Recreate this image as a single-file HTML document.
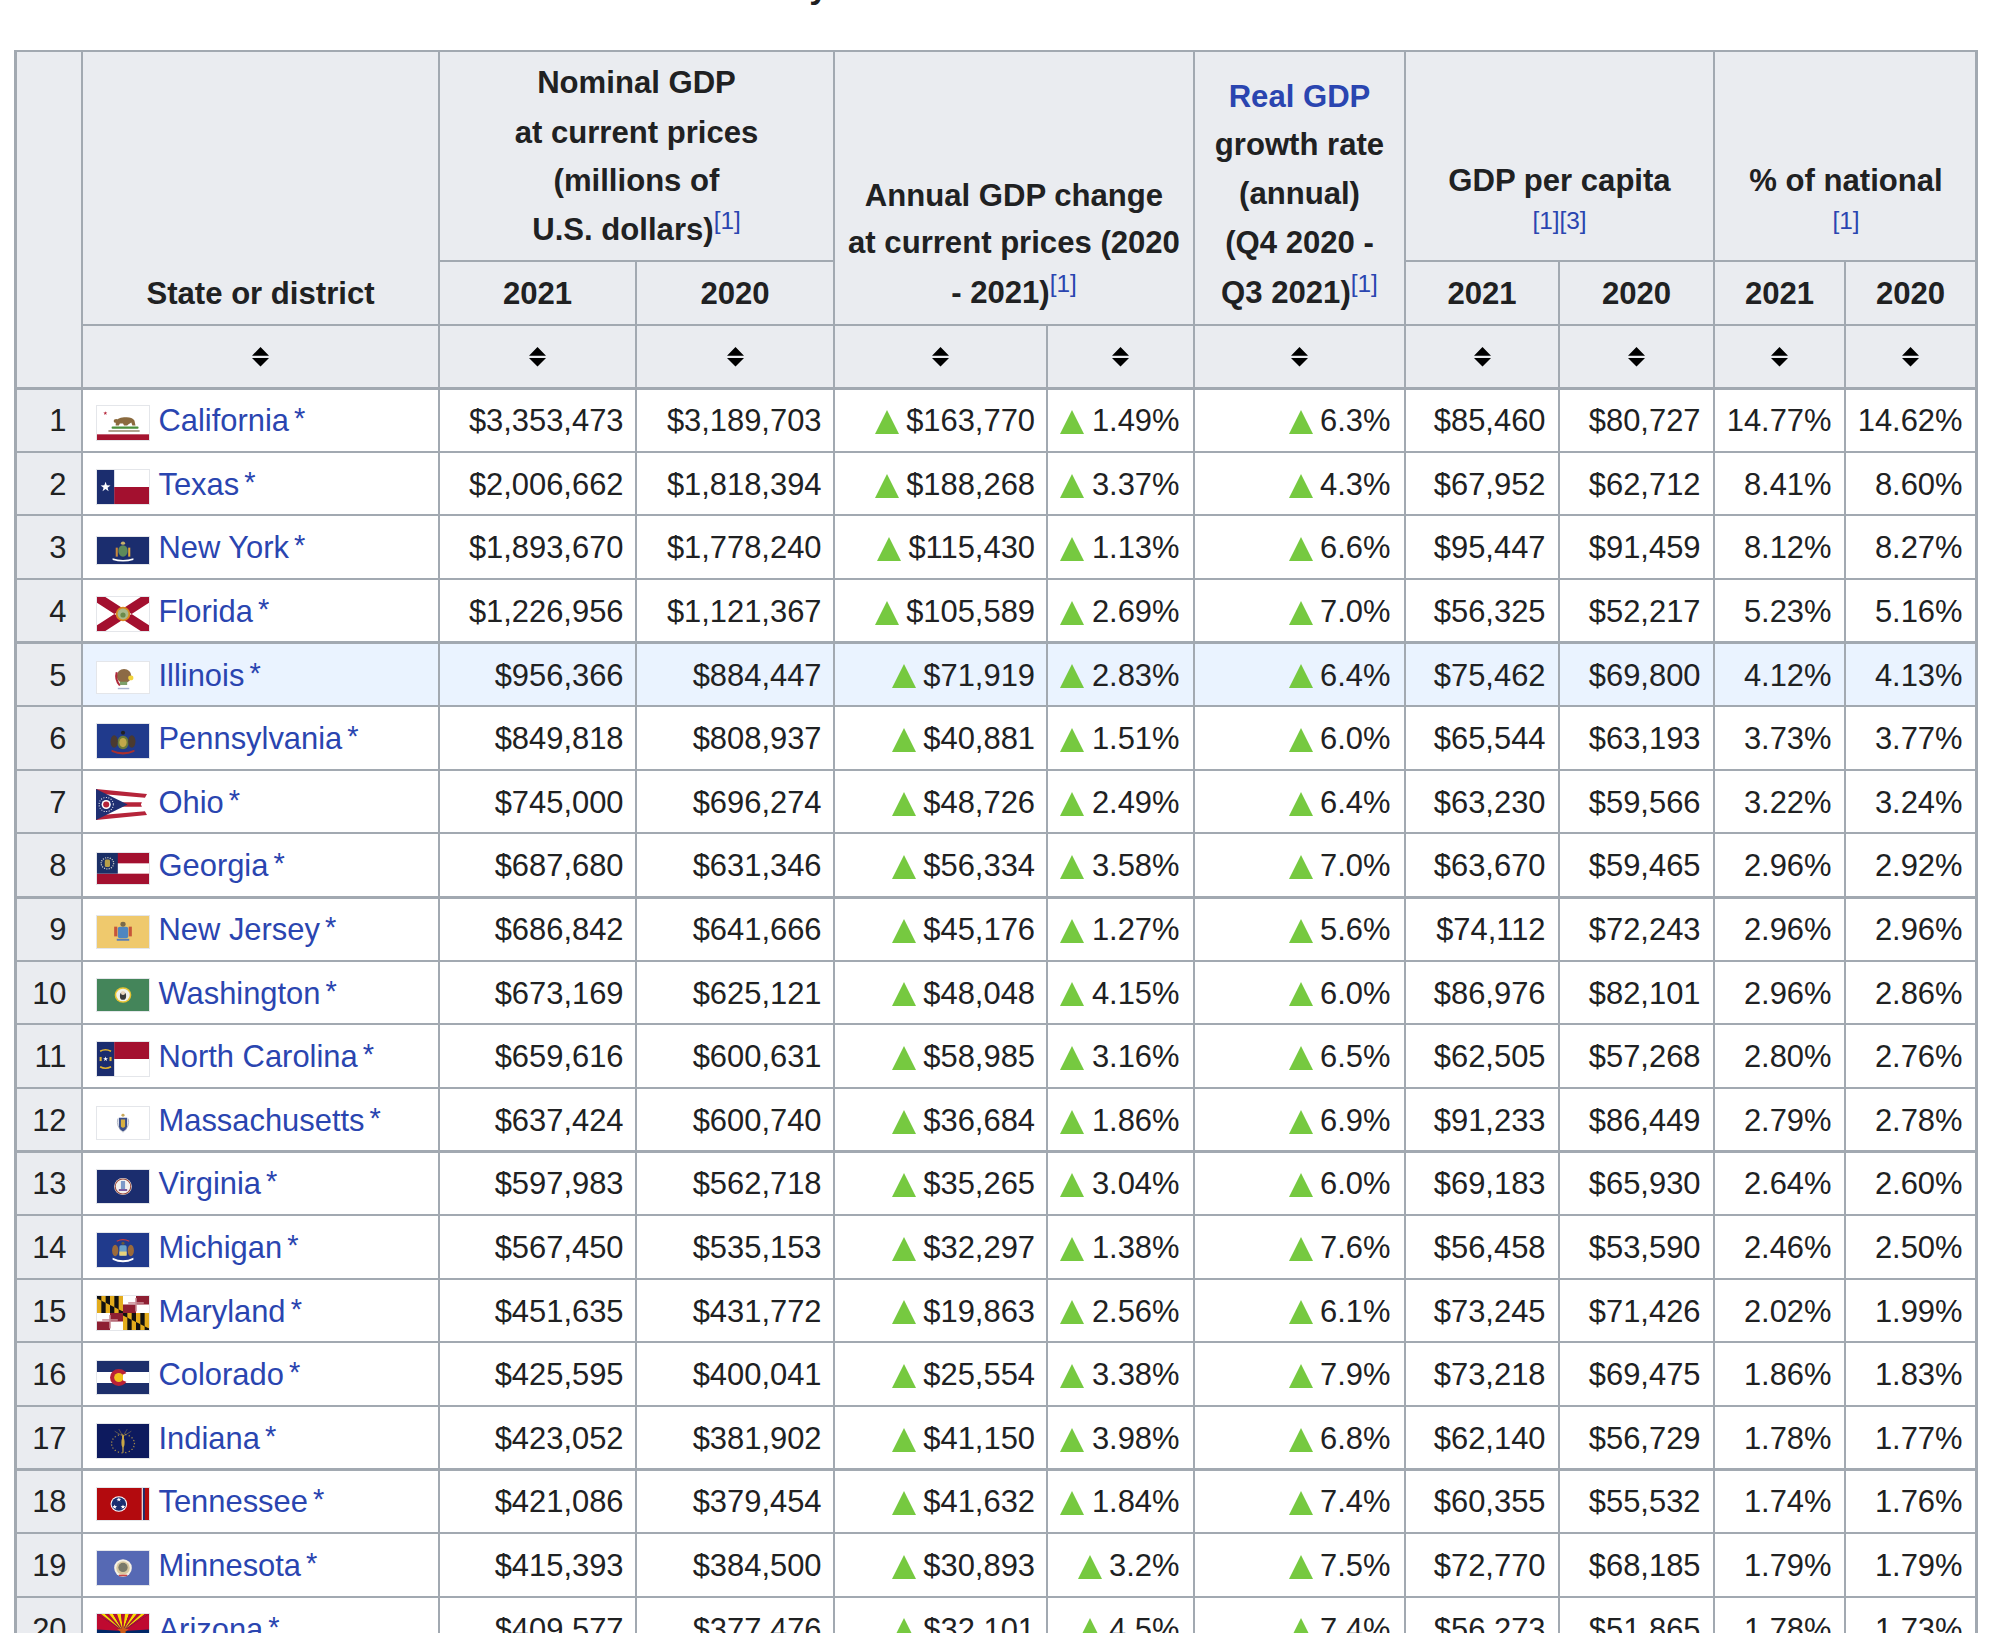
<!DOCTYPE html>
<html><head><meta charset="utf-8"><title>GDP by state</title>
<style>
html,body{margin:0;padding:0;background:#fff;}
body{width:2000px;height:1633px;overflow:hidden;position:relative;font-family:"Liberation Sans",sans-serif;font-size:30.9px;color:#202122;}
body>div{position:absolute;}
.ref{font-weight:normal;color:#2a45b0;font-size:24.4px;vertical-align:super;line-height:1;}
.tri{vertical-align:middle;position:relative;top:-1px;margin-right:-1px;}
.n{text-align:right;white-space:nowrap;line-height:49.3px;}
.ast{margin-left:-3.5px;font-size:29px;position:relative;top:-3px;}
svg{display:inline-block;}
body>div>svg.s{display:block;}
.cap{font-weight:bold;}
</style></head><body>
<div class="cap" style="left:706px;top:-34px;font-size:34px;line-height:40px;white-space:nowrap">GDP by state</div>
<div style="left:14px;top:50px;width:1963px;height:339px;background:#eaecf0"></div>
<div style="left:14px;top:389px;width:68px;height:1244px;background:#eaecf0"></div>
<div style="left:83px;top:643px;width:1892px;height:63px;background:#eaf3ff"></div>
<div style="left:14px;top:50px;width:1963px;height:2px;background:#a2a9b1"></div>
<div style="left:438px;top:260px;width:397px;height:2px;background:#a2a9b1"></div>
<div style="left:1404px;top:260px;width:573px;height:2px;background:#a2a9b1"></div>
<div style="left:81px;top:324px;width:1896px;height:2px;background:#a2a9b1"></div>
<div style="left:14px;top:387px;width:1963px;height:3px;background:#a2a9b1"></div>
<div style="left:14px;top:451px;width:1963px;height:2px;background:#a2a9b1"></div>
<div style="left:14px;top:514px;width:1963px;height:2px;background:#a2a9b1"></div>
<div style="left:14px;top:578px;width:1963px;height:2px;background:#a2a9b1"></div>
<div style="left:14px;top:641px;width:1963px;height:3px;background:#a2a9b1"></div>
<div style="left:14px;top:705px;width:1963px;height:2px;background:#a2a9b1"></div>
<div style="left:14px;top:769px;width:1963px;height:2px;background:#a2a9b1"></div>
<div style="left:14px;top:832px;width:1963px;height:2px;background:#a2a9b1"></div>
<div style="left:14px;top:896px;width:1963px;height:3px;background:#a2a9b1"></div>
<div style="left:14px;top:960px;width:1963px;height:2px;background:#a2a9b1"></div>
<div style="left:14px;top:1023px;width:1963px;height:2px;background:#a2a9b1"></div>
<div style="left:14px;top:1087px;width:1963px;height:2px;background:#a2a9b1"></div>
<div style="left:14px;top:1150px;width:1963px;height:3px;background:#a2a9b1"></div>
<div style="left:14px;top:1214px;width:1963px;height:2px;background:#a2a9b1"></div>
<div style="left:14px;top:1278px;width:1963px;height:2px;background:#a2a9b1"></div>
<div style="left:14px;top:1341px;width:1963px;height:2px;background:#a2a9b1"></div>
<div style="left:14px;top:1405px;width:1963px;height:2px;background:#a2a9b1"></div>
<div style="left:14px;top:1468px;width:1963px;height:3px;background:#a2a9b1"></div>
<div style="left:14px;top:1532px;width:1963px;height:2px;background:#a2a9b1"></div>
<div style="left:14px;top:1596px;width:1963px;height:2px;background:#a2a9b1"></div>
<div style="left:14px;top:50px;width:3px;height:1583px;background:#a2a9b1"></div>
<div style="left:1975px;top:50px;width:3px;height:1583px;background:#a2a9b1"></div>
<div style="left:81px;top:50px;width:2px;height:1583px;background:#a2a9b1"></div>
<div style="left:438px;top:50px;width:2px;height:1583px;background:#a2a9b1"></div>
<div style="left:833px;top:50px;width:2px;height:1583px;background:#a2a9b1"></div>
<div style="left:1193px;top:50px;width:2px;height:1583px;background:#a2a9b1"></div>
<div style="left:1404px;top:50px;width:2px;height:1583px;background:#a2a9b1"></div>
<div style="left:1713px;top:50px;width:2px;height:1583px;background:#a2a9b1"></div>
<div style="left:635px;top:260px;width:2px;height:1373px;background:#a2a9b1"></div>
<div style="left:1558px;top:260px;width:2px;height:1373px;background:#a2a9b1"></div>
<div style="left:1844px;top:260px;width:2px;height:1373px;background:#a2a9b1"></div>
<div style="left:1046px;top:324px;width:2px;height:1309px;background:#a2a9b1"></div>
<div style="left:60.5px;top:269.23px;width:400px;text-align:center;font-weight:bold;color:#202122;font-size:31.1px;line-height:49.3px;white-space:nowrap">State or district</div>
<div style="left:436.5px;top:58.48px;width:400px;text-align:center;font-weight:bold;color:#202122;font-size:31.1px;line-height:49.3px;white-space:nowrap">Nominal GDP</div>
<div style="left:436.5px;top:107.88px;width:400px;text-align:center;font-weight:bold;color:#202122;font-size:31.1px;line-height:49.3px;white-space:nowrap">at current prices</div>
<div style="left:436.5px;top:156.18px;width:400px;text-align:center;font-weight:bold;color:#202122;font-size:31.1px;line-height:49.3px;white-space:nowrap">(millions of</div>
<div style="left:436.5px;top:205.48px;width:400px;text-align:center;font-weight:bold;color:#202122;font-size:31.1px;line-height:49.3px;white-space:nowrap">U.S. dollars)<span class="ref">[1]</span></div>
<div style="left:337.5px;top:268.98px;width:400px;text-align:center;font-weight:bold;color:#202122;font-size:31.1px;line-height:49.3px;white-space:nowrap">2021</div>
<div style="left:535.0px;top:268.98px;width:400px;text-align:center;font-weight:bold;color:#202122;font-size:31.1px;line-height:49.3px;white-space:nowrap">2020</div>
<div style="left:814.0px;top:170.68px;width:400px;text-align:center;font-weight:bold;color:#202122;font-size:31.1px;line-height:49.3px;white-space:nowrap">Annual GDP change</div>
<div style="left:814.0px;top:218.48px;width:400px;text-align:center;font-weight:bold;color:#202122;font-size:31.1px;line-height:49.3px;white-space:nowrap">at current prices (2020</div>
<div style="left:814.0px;top:267.78px;width:400px;text-align:center;font-weight:bold;color:#202122;font-size:31.1px;line-height:49.3px;white-space:nowrap">- 2021)<span class="ref">[1]</span></div>
<div style="left:1099.5px;top:71.98px;width:400px;text-align:center;font-weight:bold;color:#2a45b0;font-size:31.1px;line-height:49.3px;white-space:nowrap">Real GDP</div>
<div style="left:1099.5px;top:119.88px;width:400px;text-align:center;font-weight:bold;color:#202122;font-size:31.1px;line-height:49.3px;white-space:nowrap">growth rate</div>
<div style="left:1099.5px;top:169.18px;width:400px;text-align:center;font-weight:bold;color:#202122;font-size:31.1px;line-height:49.3px;white-space:nowrap">(annual)</div>
<div style="left:1099.5px;top:218.48px;width:400px;text-align:center;font-weight:bold;color:#202122;font-size:31.1px;line-height:49.3px;white-space:nowrap">(Q4 2020 -</div>
<div style="left:1099.5px;top:267.78px;width:400px;text-align:center;font-weight:bold;color:#202122;font-size:31.1px;line-height:49.3px;white-space:nowrap">Q3 2021)<span class="ref">[1]</span></div>
<div style="left:1359.5px;top:156.48px;width:400px;text-align:center;font-weight:bold;color:#202122;font-size:31.1px;line-height:49.3px;white-space:nowrap">GDP per capita</div>
<div style="left:1646.0px;top:156.48px;width:400px;text-align:center;font-weight:bold;color:#202122;font-size:31.1px;line-height:49.3px;white-space:nowrap">% of national</div>
<div style="left:1359.5px;top:205.48px;width:400px;text-align:center;font-weight:normal;color:#202122;font-size:31.1px;line-height:49.3px;white-space:nowrap"><span class="ref">[1][3]</span></div>
<div style="left:1646.0px;top:205.48px;width:400px;text-align:center;font-weight:normal;color:#202122;font-size:31.1px;line-height:49.3px;white-space:nowrap"><span class="ref">[1]</span></div>
<div style="left:1282.0px;top:268.98px;width:400px;text-align:center;font-weight:bold;color:#202122;font-size:31.1px;line-height:49.3px;white-space:nowrap">2021</div>
<div style="left:1436.5px;top:268.98px;width:400px;text-align:center;font-weight:bold;color:#202122;font-size:31.1px;line-height:49.3px;white-space:nowrap">2020</div>
<div style="left:1579.5px;top:268.98px;width:400px;text-align:center;font-weight:bold;color:#202122;font-size:31.1px;line-height:49.3px;white-space:nowrap">2021</div>
<div style="left:1710.5px;top:268.98px;width:400px;text-align:center;font-weight:bold;color:#202122;font-size:31.1px;line-height:49.3px;white-space:nowrap">2020</div>
<div style="left:252.0px;top:346.9px;width:17px;height:20px"><svg class="s" width="17" height="20" viewBox="0 0 17 20"><path d="M0 8.7L8.5 0L17 8.7Z M0 11L17 11L8.5 19.4Z" fill="#000"/></svg></div>
<div style="left:528.5px;top:346.9px;width:17px;height:20px"><svg class="s" width="17" height="20" viewBox="0 0 17 20"><path d="M0 8.7L8.5 0L17 8.7Z M0 11L17 11L8.5 19.4Z" fill="#000"/></svg></div>
<div style="left:726.5px;top:346.9px;width:17px;height:20px"><svg class="s" width="17" height="20" viewBox="0 0 17 20"><path d="M0 8.7L8.5 0L17 8.7Z M0 11L17 11L8.5 19.4Z" fill="#000"/></svg></div>
<div style="left:931.5px;top:346.9px;width:17px;height:20px"><svg class="s" width="17" height="20" viewBox="0 0 17 20"><path d="M0 8.7L8.5 0L17 8.7Z M0 11L17 11L8.5 19.4Z" fill="#000"/></svg></div>
<div style="left:1111.5px;top:346.9px;width:17px;height:20px"><svg class="s" width="17" height="20" viewBox="0 0 17 20"><path d="M0 8.7L8.5 0L17 8.7Z M0 11L17 11L8.5 19.4Z" fill="#000"/></svg></div>
<div style="left:1290.5px;top:346.9px;width:17px;height:20px"><svg class="s" width="17" height="20" viewBox="0 0 17 20"><path d="M0 8.7L8.5 0L17 8.7Z M0 11L17 11L8.5 19.4Z" fill="#000"/></svg></div>
<div style="left:1473.5px;top:346.9px;width:17px;height:20px"><svg class="s" width="17" height="20" viewBox="0 0 17 20"><path d="M0 8.7L8.5 0L17 8.7Z M0 11L17 11L8.5 19.4Z" fill="#000"/></svg></div>
<div style="left:1628.0px;top:346.9px;width:17px;height:20px"><svg class="s" width="17" height="20" viewBox="0 0 17 20"><path d="M0 8.7L8.5 0L17 8.7Z M0 11L17 11L8.5 19.4Z" fill="#000"/></svg></div>
<div style="left:1770.5px;top:346.9px;width:17px;height:20px"><svg class="s" width="17" height="20" viewBox="0 0 17 20"><path d="M0 8.7L8.5 0L17 8.7Z M0 11L17 11L8.5 19.4Z" fill="#000"/></svg></div>
<div style="left:1902.0px;top:346.9px;width:17px;height:20px"><svg class="s" width="17" height="20" viewBox="0 0 17 20"><path d="M0 8.7L8.5 0L17 8.7Z M0 11L17 11L8.5 19.4Z" fill="#000"/></svg></div>
<div class="n" style="right:1933.5px;top:396.18px;color:#202122">1</div>
<div style="left:96px;top:405.0px;width:54px;height:36px;border:1.5px solid #e4e6ea;box-sizing:border-box;background:#fff"><svg width="100%" height="100%" viewBox="0 0 100 66" preserveAspectRatio="none" style="display:block"><rect width="100" height="66" fill="#fff"/><polygon points="16.00,10.00 16.94,12.71 19.80,12.76 17.52,14.49 18.35,17.24 16.00,15.60 13.65,17.24 14.48,14.49 12.20,12.76 15.06,12.71" fill="#b5263a"/><path d="M36 34 Q38 22 52 22 Q66 20 72 28 L74 38 L68 38 L66 32 L60 36 L58 38 L52 38 L50 34 L44 34 L42 38 L36 38Z" fill="#8a6a3e"/><ellipse cx="37" cy="29" rx="5" ry="4" fill="#8a6a3e"/><rect x="28" y="40" width="52" height="4" rx="2" fill="#4b8f3a"/><rect x="22" y="47" width="60" height="3" fill="#9a8a70"/><rect y="55" width="100" height="11" fill="#a5142f"/></svg></div>
<div style="left:158.5px;top:396.18px;color:#2a45b0;white-space:nowrap;line-height:49.3px">California <span class="ast">*</span></div>
<div class="n" style="right:1376.5px;top:396.18px;color:#202122">$3,353,473</div>
<div class="n" style="right:1178.5px;top:396.18px;color:#202122">$3,189,703</div>
<div class="n" style="right:965.0px;top:396.18px;color:#202122"><svg class="tri" width="24" height="24" viewBox="0 0 24 24"><path d="M0 24L12 0L24 24Z" fill="#76c940"/></svg> $163,770</div>
<div class="n" style="right:820.5px;top:396.18px;color:#202122"><svg class="tri" width="24" height="24" viewBox="0 0 24 24"><path d="M0 24L12 0L24 24Z" fill="#76c940"/></svg> 1.49%</div>
<div class="n" style="right:609.5px;top:396.18px;color:#202122"><svg class="tri" width="24" height="24" viewBox="0 0 24 24"><path d="M0 24L12 0L24 24Z" fill="#76c940"/></svg> 6.3%</div>
<div class="n" style="right:454.5px;top:396.18px;color:#202122">$85,460</div>
<div class="n" style="right:299.5px;top:396.18px;color:#202122">$80,727</div>
<div class="n" style="right:168.5px;top:396.18px;color:#202122">14.77%</div>
<div class="n" style="right:37.5px;top:396.18px;color:#202122">14.62%</div>
<div class="n" style="right:1933.5px;top:459.78px;color:#202122">2</div>
<div style="left:96px;top:468.6px;width:54px;height:36px;border:1.5px solid #e4e6ea;box-sizing:border-box;background:#fff"><svg width="100%" height="100%" viewBox="0 0 100 66" preserveAspectRatio="none" style="display:block"><rect width="100" height="66" fill="#fff"/><rect x="33" y="33" width="67" height="33" fill="#a3102f"/><rect width="33" height="66" fill="#1b2d6e"/><polygon points="16.50,23.00 18.85,29.76 26.01,29.91 20.30,34.24 22.38,41.09 16.50,37.00 10.62,41.09 12.70,34.24 6.99,29.91 14.15,29.76" fill="#fff"/></svg></div>
<div style="left:158.5px;top:459.78px;color:#2a45b0;white-space:nowrap;line-height:49.3px">Texas <span class="ast">*</span></div>
<div class="n" style="right:1376.5px;top:459.78px;color:#202122">$2,006,662</div>
<div class="n" style="right:1178.5px;top:459.78px;color:#202122">$1,818,394</div>
<div class="n" style="right:965.0px;top:459.78px;color:#202122"><svg class="tri" width="24" height="24" viewBox="0 0 24 24"><path d="M0 24L12 0L24 24Z" fill="#76c940"/></svg> $188,268</div>
<div class="n" style="right:820.5px;top:459.78px;color:#202122"><svg class="tri" width="24" height="24" viewBox="0 0 24 24"><path d="M0 24L12 0L24 24Z" fill="#76c940"/></svg> 3.37%</div>
<div class="n" style="right:609.5px;top:459.78px;color:#202122"><svg class="tri" width="24" height="24" viewBox="0 0 24 24"><path d="M0 24L12 0L24 24Z" fill="#76c940"/></svg> 4.3%</div>
<div class="n" style="right:454.5px;top:459.78px;color:#202122">$67,952</div>
<div class="n" style="right:299.5px;top:459.78px;color:#202122">$62,712</div>
<div class="n" style="right:168.5px;top:459.78px;color:#202122">8.41%</div>
<div class="n" style="right:37.5px;top:459.78px;color:#202122">8.60%</div>
<div class="n" style="right:1933.5px;top:523.38px;color:#202122">3</div>
<div style="left:96px;top:535.7px;width:54px;height:29px;border:1.5px solid #e4e6ea;box-sizing:border-box;background:#fff"><svg width="100%" height="100%" viewBox="0 0 100 66" preserveAspectRatio="none" style="display:block"><rect width="100" height="66" fill="#1b2d6e"/><ellipse cx="50" cy="34" rx="9" ry="14" fill="#5d8a5a"/><rect x="36" y="26" width="4" height="22" fill="#c9883a"/><rect x="60" y="26" width="4" height="22" fill="#e0a63a"/><path d="M30 52 Q50 60 70 52 L70 56 Q50 64 30 56Z" fill="#fff"/><circle cx="50" cy="15" r="4" fill="#c9b36a"/></svg></div>
<div style="left:158.5px;top:523.38px;color:#2a45b0;white-space:nowrap;line-height:49.3px">New York <span class="ast">*</span></div>
<div class="n" style="right:1376.5px;top:523.38px;color:#202122">$1,893,670</div>
<div class="n" style="right:1178.5px;top:523.38px;color:#202122">$1,778,240</div>
<div class="n" style="right:965.0px;top:523.38px;color:#202122"><svg class="tri" width="24" height="24" viewBox="0 0 24 24"><path d="M0 24L12 0L24 24Z" fill="#76c940"/></svg> $115,430</div>
<div class="n" style="right:820.5px;top:523.38px;color:#202122"><svg class="tri" width="24" height="24" viewBox="0 0 24 24"><path d="M0 24L12 0L24 24Z" fill="#76c940"/></svg> 1.13%</div>
<div class="n" style="right:609.5px;top:523.38px;color:#202122"><svg class="tri" width="24" height="24" viewBox="0 0 24 24"><path d="M0 24L12 0L24 24Z" fill="#76c940"/></svg> 6.6%</div>
<div class="n" style="right:454.5px;top:523.38px;color:#202122">$95,447</div>
<div class="n" style="right:299.5px;top:523.38px;color:#202122">$91,459</div>
<div class="n" style="right:168.5px;top:523.38px;color:#202122">8.12%</div>
<div class="n" style="right:37.5px;top:523.38px;color:#202122">8.27%</div>
<div class="n" style="right:1933.5px;top:586.98px;color:#202122">4</div>
<div style="left:96px;top:595.8px;width:54px;height:36px;border:1.5px solid #e4e6ea;box-sizing:border-box;background:#fff"><svg width="100%" height="100%" viewBox="0 0 100 66" preserveAspectRatio="none" style="display:block"><rect width="100" height="66" fill="#fff"/><path d="M0 0L16 0L100 55L100 66L84 66L0 11Z M100 0L84 0L0 55L0 66L16 66L100 11Z" fill="#a3102f"/><circle cx="50" cy="33" r="14" fill="#d98a1f"/><circle cx="50" cy="33" r="10.5" fill="#a9b98a"/><circle cx="50" cy="35" r="5" fill="#6a8a4a"/></svg></div>
<div style="left:158.5px;top:586.98px;color:#2a45b0;white-space:nowrap;line-height:49.3px">Florida <span class="ast">*</span></div>
<div class="n" style="right:1376.5px;top:586.98px;color:#202122">$1,226,956</div>
<div class="n" style="right:1178.5px;top:586.98px;color:#202122">$1,121,367</div>
<div class="n" style="right:965.0px;top:586.98px;color:#202122"><svg class="tri" width="24" height="24" viewBox="0 0 24 24"><path d="M0 24L12 0L24 24Z" fill="#76c940"/></svg> $105,589</div>
<div class="n" style="right:820.5px;top:586.98px;color:#202122"><svg class="tri" width="24" height="24" viewBox="0 0 24 24"><path d="M0 24L12 0L24 24Z" fill="#76c940"/></svg> 2.69%</div>
<div class="n" style="right:609.5px;top:586.98px;color:#202122"><svg class="tri" width="24" height="24" viewBox="0 0 24 24"><path d="M0 24L12 0L24 24Z" fill="#76c940"/></svg> 7.0%</div>
<div class="n" style="right:454.5px;top:586.98px;color:#202122">$56,325</div>
<div class="n" style="right:299.5px;top:586.98px;color:#202122">$52,217</div>
<div class="n" style="right:168.5px;top:586.98px;color:#202122">5.23%</div>
<div class="n" style="right:37.5px;top:586.98px;color:#202122">5.16%</div>
<div class="n" style="right:1933.5px;top:650.58px;color:#202122">5</div>
<div style="left:96px;top:660.9px;width:54px;height:33px;border:1.5px solid #e4e6ea;box-sizing:border-box;background:#fff"><svg width="100%" height="100%" viewBox="0 0 100 66" preserveAspectRatio="none" style="display:block"><rect width="100" height="66" fill="#fff"/><ellipse cx="52" cy="30" rx="14" ry="15" fill="#8c6a45"/><path d="M38 22 Q34 38 44 50" stroke="#b0283a" stroke-width="4" fill="none"/><circle cx="65" cy="34" r="5" fill="#f2d43a"/><rect x="44" y="42" width="14" height="7" fill="#7da06a"/><rect x="40" y="55" width="22" height="3" fill="#a9b4cf"/></svg></div>
<div style="left:158.5px;top:650.58px;color:#2a45b0;white-space:nowrap;line-height:49.3px">Illinois <span class="ast">*</span></div>
<div class="n" style="right:1376.5px;top:650.58px;color:#202122">$956,366</div>
<div class="n" style="right:1178.5px;top:650.58px;color:#202122">$884,447</div>
<div class="n" style="right:965.0px;top:650.58px;color:#202122"><svg class="tri" width="24" height="24" viewBox="0 0 24 24"><path d="M0 24L12 0L24 24Z" fill="#76c940"/></svg> $71,919</div>
<div class="n" style="right:820.5px;top:650.58px;color:#202122"><svg class="tri" width="24" height="24" viewBox="0 0 24 24"><path d="M0 24L12 0L24 24Z" fill="#76c940"/></svg> 2.83%</div>
<div class="n" style="right:609.5px;top:650.58px;color:#202122"><svg class="tri" width="24" height="24" viewBox="0 0 24 24"><path d="M0 24L12 0L24 24Z" fill="#76c940"/></svg> 6.4%</div>
<div class="n" style="right:454.5px;top:650.58px;color:#202122">$75,462</div>
<div class="n" style="right:299.5px;top:650.58px;color:#202122">$69,800</div>
<div class="n" style="right:168.5px;top:650.58px;color:#202122">4.12%</div>
<div class="n" style="right:37.5px;top:650.58px;color:#202122">4.13%</div>
<div class="n" style="right:1933.5px;top:714.18px;color:#202122">6</div>
<div style="left:96px;top:723.0px;width:54px;height:36px;border:1.5px solid #e4e6ea;box-sizing:border-box;background:#fff"><svg width="100%" height="100%" viewBox="0 0 100 66" preserveAspectRatio="none" style="display:block"><rect width="100" height="66" fill="#203a8c"/><ellipse cx="50" cy="36" rx="11" ry="13" fill="#6a7a3a"/><ellipse cx="50" cy="36" rx="7" ry="9" fill="#c2a84a"/><ellipse cx="33" cy="34" rx="7" ry="12" fill="#4a3a30"/><ellipse cx="67" cy="34" rx="7" ry="12" fill="#4a3a30"/><path d="M28 50 Q50 60 72 50 L72 54 Q50 64 28 54Z" fill="#a8302e"/><circle cx="50" cy="17" r="4" fill="#222"/></svg></div>
<div style="left:158.5px;top:714.18px;color:#2a45b0;white-space:nowrap;line-height:49.3px">Pennsylvania <span class="ast">*</span></div>
<div class="n" style="right:1376.5px;top:714.18px;color:#202122">$849,818</div>
<div class="n" style="right:1178.5px;top:714.18px;color:#202122">$808,937</div>
<div class="n" style="right:965.0px;top:714.18px;color:#202122"><svg class="tri" width="24" height="24" viewBox="0 0 24 24"><path d="M0 24L12 0L24 24Z" fill="#76c940"/></svg> $40,881</div>
<div class="n" style="right:820.5px;top:714.18px;color:#202122"><svg class="tri" width="24" height="24" viewBox="0 0 24 24"><path d="M0 24L12 0L24 24Z" fill="#76c940"/></svg> 1.51%</div>
<div class="n" style="right:609.5px;top:714.18px;color:#202122"><svg class="tri" width="24" height="24" viewBox="0 0 24 24"><path d="M0 24L12 0L24 24Z" fill="#76c940"/></svg> 6.0%</div>
<div class="n" style="right:454.5px;top:714.18px;color:#202122">$65,544</div>
<div class="n" style="right:299.5px;top:714.18px;color:#202122">$63,193</div>
<div class="n" style="right:168.5px;top:714.18px;color:#202122">3.73%</div>
<div class="n" style="right:37.5px;top:714.18px;color:#202122">3.77%</div>
<div class="n" style="right:1933.5px;top:777.78px;color:#202122">7</div>
<div style="left:96px;top:789.1px;width:51px;height:31px"><svg width="51" height="31" viewBox="0 0 100 61" preserveAspectRatio="none" style="display:block"><path d="M0 0 L100 10 L88 30.5 L100 51 L0 61Z" fill="#fff"/><path d="M0 0 L100 10 L96 17 L0 9Z M0 52 L96 44 L100 51 L0 61Z M0 26 L90 26 L88 30.5 L90 35 L0 35Z" fill="#b5243a"/><path d="M0 0 L62 30.5 L0 61Z" fill="#1f2f72"/><circle cx="20" cy="30.5" r="9" fill="#fff"/><circle cx="20" cy="30.5" r="6" fill="#b5243a"/><circle cx="20" cy="30.5" r="14" fill="none" stroke="#fff" stroke-width="2" stroke-dasharray="1.8 3.2"/></svg></div>
<div style="left:158.5px;top:777.78px;color:#2a45b0;white-space:nowrap;line-height:49.3px">Ohio <span class="ast">*</span></div>
<div class="n" style="right:1376.5px;top:777.78px;color:#202122">$745,000</div>
<div class="n" style="right:1178.5px;top:777.78px;color:#202122">$696,274</div>
<div class="n" style="right:965.0px;top:777.78px;color:#202122"><svg class="tri" width="24" height="24" viewBox="0 0 24 24"><path d="M0 24L12 0L24 24Z" fill="#76c940"/></svg> $48,726</div>
<div class="n" style="right:820.5px;top:777.78px;color:#202122"><svg class="tri" width="24" height="24" viewBox="0 0 24 24"><path d="M0 24L12 0L24 24Z" fill="#76c940"/></svg> 2.49%</div>
<div class="n" style="right:609.5px;top:777.78px;color:#202122"><svg class="tri" width="24" height="24" viewBox="0 0 24 24"><path d="M0 24L12 0L24 24Z" fill="#76c940"/></svg> 6.4%</div>
<div class="n" style="right:454.5px;top:777.78px;color:#202122">$63,230</div>
<div class="n" style="right:299.5px;top:777.78px;color:#202122">$59,566</div>
<div class="n" style="right:168.5px;top:777.78px;color:#202122">3.22%</div>
<div class="n" style="right:37.5px;top:777.78px;color:#202122">3.24%</div>
<div class="n" style="right:1933.5px;top:841.38px;color:#202122">8</div>
<div style="left:96px;top:851.7px;width:54px;height:33px;border:1.5px solid #e4e6ea;box-sizing:border-box;background:#fff"><svg width="100%" height="100%" viewBox="0 0 100 66" preserveAspectRatio="none" style="display:block"><rect width="100" height="66" fill="#a3102f"/><rect y="22" width="100" height="22" fill="#fff"/><rect width="40" height="44" fill="#1b2f66"/><circle cx="20" cy="22" r="12" fill="none" stroke="#e9e7d8" stroke-width="2.5" stroke-dasharray="2 2.6"/><rect x="15" y="14" width="10" height="16" rx="3" fill="#b8a04a"/></svg></div>
<div style="left:158.5px;top:841.38px;color:#2a45b0;white-space:nowrap;line-height:49.3px">Georgia <span class="ast">*</span></div>
<div class="n" style="right:1376.5px;top:841.38px;color:#202122">$687,680</div>
<div class="n" style="right:1178.5px;top:841.38px;color:#202122">$631,346</div>
<div class="n" style="right:965.0px;top:841.38px;color:#202122"><svg class="tri" width="24" height="24" viewBox="0 0 24 24"><path d="M0 24L12 0L24 24Z" fill="#76c940"/></svg> $56,334</div>
<div class="n" style="right:820.5px;top:841.38px;color:#202122"><svg class="tri" width="24" height="24" viewBox="0 0 24 24"><path d="M0 24L12 0L24 24Z" fill="#76c940"/></svg> 3.58%</div>
<div class="n" style="right:609.5px;top:841.38px;color:#202122"><svg class="tri" width="24" height="24" viewBox="0 0 24 24"><path d="M0 24L12 0L24 24Z" fill="#76c940"/></svg> 7.0%</div>
<div class="n" style="right:454.5px;top:841.38px;color:#202122">$63,670</div>
<div class="n" style="right:299.5px;top:841.38px;color:#202122">$59,465</div>
<div class="n" style="right:168.5px;top:841.38px;color:#202122">2.96%</div>
<div class="n" style="right:37.5px;top:841.38px;color:#202122">2.92%</div>
<div class="n" style="right:1933.5px;top:904.98px;color:#202122">9</div>
<div style="left:96px;top:914.8px;width:54px;height:34px;border:1.5px solid #e4e6ea;box-sizing:border-box;background:#fff"><svg width="100%" height="100%" viewBox="0 0 100 66" preserveAspectRatio="none" style="display:block"><rect width="100" height="66" fill="#efc96d"/><rect x="40" y="22" width="20" height="24" rx="4" fill="#4f86c0"/><rect x="33" y="22" width="6" height="20" fill="#c6553a"/><rect x="61" y="22" width="6" height="20" fill="#c6553a"/><circle cx="50" cy="17" r="5" fill="#7a6a4a"/><rect x="38" y="47" width="24" height="4" fill="#5a7fb8"/></svg></div>
<div style="left:158.5px;top:904.98px;color:#2a45b0;white-space:nowrap;line-height:49.3px">New Jersey <span class="ast">*</span></div>
<div class="n" style="right:1376.5px;top:904.98px;color:#202122">$686,842</div>
<div class="n" style="right:1178.5px;top:904.98px;color:#202122">$641,666</div>
<div class="n" style="right:965.0px;top:904.98px;color:#202122"><svg class="tri" width="24" height="24" viewBox="0 0 24 24"><path d="M0 24L12 0L24 24Z" fill="#76c940"/></svg> $45,176</div>
<div class="n" style="right:820.5px;top:904.98px;color:#202122"><svg class="tri" width="24" height="24" viewBox="0 0 24 24"><path d="M0 24L12 0L24 24Z" fill="#76c940"/></svg> 1.27%</div>
<div class="n" style="right:609.5px;top:904.98px;color:#202122"><svg class="tri" width="24" height="24" viewBox="0 0 24 24"><path d="M0 24L12 0L24 24Z" fill="#76c940"/></svg> 5.6%</div>
<div class="n" style="right:454.5px;top:904.98px;color:#202122">$74,112</div>
<div class="n" style="right:299.5px;top:904.98px;color:#202122">$72,243</div>
<div class="n" style="right:168.5px;top:904.98px;color:#202122">2.96%</div>
<div class="n" style="right:37.5px;top:904.98px;color:#202122">2.96%</div>
<div class="n" style="right:1933.5px;top:968.58px;color:#202122">10</div>
<div style="left:96px;top:978.4px;width:54px;height:34px;border:1.5px solid #e4e6ea;box-sizing:border-box;background:#fff"><svg width="100%" height="100%" viewBox="0 0 100 66" preserveAspectRatio="none" style="display:block"><rect width="100" height="66" fill="#44855a"/><circle cx="50" cy="33" r="16" fill="#e8c431"/><circle cx="50" cy="33" r="13" fill="#f2f2ec"/><ellipse cx="50" cy="35" rx="6" ry="8" fill="#3a3a3a"/><circle cx="50" cy="29" r="4" fill="#e9d6c0"/></svg></div>
<div style="left:158.5px;top:968.58px;color:#2a45b0;white-space:nowrap;line-height:49.3px">Washington <span class="ast">*</span></div>
<div class="n" style="right:1376.5px;top:968.58px;color:#202122">$673,169</div>
<div class="n" style="right:1178.5px;top:968.58px;color:#202122">$625,121</div>
<div class="n" style="right:965.0px;top:968.58px;color:#202122"><svg class="tri" width="24" height="24" viewBox="0 0 24 24"><path d="M0 24L12 0L24 24Z" fill="#76c940"/></svg> $48,048</div>
<div class="n" style="right:820.5px;top:968.58px;color:#202122"><svg class="tri" width="24" height="24" viewBox="0 0 24 24"><path d="M0 24L12 0L24 24Z" fill="#76c940"/></svg> 4.15%</div>
<div class="n" style="right:609.5px;top:968.58px;color:#202122"><svg class="tri" width="24" height="24" viewBox="0 0 24 24"><path d="M0 24L12 0L24 24Z" fill="#76c940"/></svg> 6.0%</div>
<div class="n" style="right:454.5px;top:968.58px;color:#202122">$86,976</div>
<div class="n" style="right:299.5px;top:968.58px;color:#202122">$82,101</div>
<div class="n" style="right:168.5px;top:968.58px;color:#202122">2.96%</div>
<div class="n" style="right:37.5px;top:968.58px;color:#202122">2.86%</div>
<div class="n" style="right:1933.5px;top:1032.18px;color:#202122">11</div>
<div style="left:96px;top:1041.0px;width:54px;height:36px;border:1.5px solid #e4e6ea;box-sizing:border-box;background:#fff"><svg width="100%" height="100%" viewBox="0 0 100 66" preserveAspectRatio="none" style="display:block"><rect width="100" height="66" fill="#fff"/><rect x="33" width="67" height="33" fill="#a3102f"/><rect width="33" height="66" fill="#1b2d6e"/><path d="M6 18 Q16 12 27 18" stroke="#e2b430" stroke-width="3" fill="none"/><path d="M6 48 Q16 54 27 48" stroke="#e2b430" stroke-width="3" fill="none"/><polygon points="16.50,28.00 17.68,31.38 21.26,31.45 18.40,33.62 19.44,37.05 16.50,35.00 13.56,37.05 14.60,33.62 11.74,31.45 15.32,31.38" fill="#fff"/><rect x="5" y="29" width="4" height="8" fill="#e2b430"/><rect x="24" y="29" width="4" height="8" fill="#e2b430"/></svg></div>
<div style="left:158.5px;top:1032.18px;color:#2a45b0;white-space:nowrap;line-height:49.3px">North Carolina <span class="ast">*</span></div>
<div class="n" style="right:1376.5px;top:1032.18px;color:#202122">$659,616</div>
<div class="n" style="right:1178.5px;top:1032.18px;color:#202122">$600,631</div>
<div class="n" style="right:965.0px;top:1032.18px;color:#202122"><svg class="tri" width="24" height="24" viewBox="0 0 24 24"><path d="M0 24L12 0L24 24Z" fill="#76c940"/></svg> $58,985</div>
<div class="n" style="right:820.5px;top:1032.18px;color:#202122"><svg class="tri" width="24" height="24" viewBox="0 0 24 24"><path d="M0 24L12 0L24 24Z" fill="#76c940"/></svg> 3.16%</div>
<div class="n" style="right:609.5px;top:1032.18px;color:#202122"><svg class="tri" width="24" height="24" viewBox="0 0 24 24"><path d="M0 24L12 0L24 24Z" fill="#76c940"/></svg> 6.5%</div>
<div class="n" style="right:454.5px;top:1032.18px;color:#202122">$62,505</div>
<div class="n" style="right:299.5px;top:1032.18px;color:#202122">$57,268</div>
<div class="n" style="right:168.5px;top:1032.18px;color:#202122">2.80%</div>
<div class="n" style="right:37.5px;top:1032.18px;color:#202122">2.76%</div>
<div class="n" style="right:1933.5px;top:1095.78px;color:#202122">12</div>
<div style="left:96px;top:1105.6px;width:54px;height:34px;border:1.5px solid #e4e6ea;box-sizing:border-box;background:#fff"><svg width="100%" height="100%" viewBox="0 0 100 66" preserveAspectRatio="none" style="display:block"><rect width="100" height="66" fill="#fff"/><path d="M42 22 L58 22 L58 38 Q58 48 50 50 Q42 48 42 38Z" fill="#3b4f8a"/><path d="M46 26 L54 26 L54 40 Q50 46 46 40Z" fill="#d8b040"/><circle cx="50" cy="17" r="3" fill="#c9a85a"/><path d="M40 24 Q36 40 50 52 Q64 40 60 24" stroke="#9aa0b0" stroke-width="1.5" fill="none"/></svg></div>
<div style="left:158.5px;top:1095.78px;color:#2a45b0;white-space:nowrap;line-height:49.3px">Massachusetts <span class="ast">*</span></div>
<div class="n" style="right:1376.5px;top:1095.78px;color:#202122">$637,424</div>
<div class="n" style="right:1178.5px;top:1095.78px;color:#202122">$600,740</div>
<div class="n" style="right:965.0px;top:1095.78px;color:#202122"><svg class="tri" width="24" height="24" viewBox="0 0 24 24"><path d="M0 24L12 0L24 24Z" fill="#76c940"/></svg> $36,684</div>
<div class="n" style="right:820.5px;top:1095.78px;color:#202122"><svg class="tri" width="24" height="24" viewBox="0 0 24 24"><path d="M0 24L12 0L24 24Z" fill="#76c940"/></svg> 1.86%</div>
<div class="n" style="right:609.5px;top:1095.78px;color:#202122"><svg class="tri" width="24" height="24" viewBox="0 0 24 24"><path d="M0 24L12 0L24 24Z" fill="#76c940"/></svg> 6.9%</div>
<div class="n" style="right:454.5px;top:1095.78px;color:#202122">$91,233</div>
<div class="n" style="right:299.5px;top:1095.78px;color:#202122">$86,449</div>
<div class="n" style="right:168.5px;top:1095.78px;color:#202122">2.79%</div>
<div class="n" style="right:37.5px;top:1095.78px;color:#202122">2.78%</div>
<div class="n" style="right:1933.5px;top:1159.38px;color:#202122">13</div>
<div style="left:96px;top:1168.7px;width:54px;height:35px;border:1.5px solid #e4e6ea;box-sizing:border-box;background:#fff"><svg width="100%" height="100%" viewBox="0 0 100 66" preserveAspectRatio="none" style="display:block"><rect width="100" height="66" fill="#1b2d6e"/><circle cx="50" cy="33" r="17" fill="#f4f2ee"/><circle cx="50" cy="33" r="15" fill="none" stroke="#9a4a3a" stroke-width="2"/><rect x="46" y="22" width="8" height="16" fill="#7c9ac8"/><rect x="42" y="38" width="16" height="4" fill="#7a5aa0"/></svg></div>
<div style="left:158.5px;top:1159.38px;color:#2a45b0;white-space:nowrap;line-height:49.3px">Virginia <span class="ast">*</span></div>
<div class="n" style="right:1376.5px;top:1159.38px;color:#202122">$597,983</div>
<div class="n" style="right:1178.5px;top:1159.38px;color:#202122">$562,718</div>
<div class="n" style="right:965.0px;top:1159.38px;color:#202122"><svg class="tri" width="24" height="24" viewBox="0 0 24 24"><path d="M0 24L12 0L24 24Z" fill="#76c940"/></svg> $35,265</div>
<div class="n" style="right:820.5px;top:1159.38px;color:#202122"><svg class="tri" width="24" height="24" viewBox="0 0 24 24"><path d="M0 24L12 0L24 24Z" fill="#76c940"/></svg> 3.04%</div>
<div class="n" style="right:609.5px;top:1159.38px;color:#202122"><svg class="tri" width="24" height="24" viewBox="0 0 24 24"><path d="M0 24L12 0L24 24Z" fill="#76c940"/></svg> 6.0%</div>
<div class="n" style="right:454.5px;top:1159.38px;color:#202122">$69,183</div>
<div class="n" style="right:299.5px;top:1159.38px;color:#202122">$65,930</div>
<div class="n" style="right:168.5px;top:1159.38px;color:#202122">2.64%</div>
<div class="n" style="right:37.5px;top:1159.38px;color:#202122">2.60%</div>
<div class="n" style="right:1933.5px;top:1222.98px;color:#202122">14</div>
<div style="left:96px;top:1231.8px;width:54px;height:36px;border:1.5px solid #e4e6ea;box-sizing:border-box;background:#fff"><svg width="100%" height="100%" viewBox="0 0 100 66" preserveAspectRatio="none" style="display:block"><rect width="100" height="66" fill="#203a8c"/><rect x="43" y="24" width="14" height="20" rx="3" fill="#6aa0c8"/><rect x="43" y="36" width="14" height="8" fill="#e8d37a"/><ellipse cx="35" cy="34" rx="6" ry="11" fill="#9b6a3a"/><ellipse cx="65" cy="34" rx="6" ry="11" fill="#9b6a3a"/><path d="M30 48 Q50 58 70 48 L70 52 Q50 62 30 52Z" fill="#fff"/><path d="M38 16 Q50 10 62 16" stroke="#c83a3a" stroke-width="2.5" fill="none"/><circle cx="50" cy="20" r="3" fill="#6a5a3a"/></svg></div>
<div style="left:158.5px;top:1222.98px;color:#2a45b0;white-space:nowrap;line-height:49.3px">Michigan <span class="ast">*</span></div>
<div class="n" style="right:1376.5px;top:1222.98px;color:#202122">$567,450</div>
<div class="n" style="right:1178.5px;top:1222.98px;color:#202122">$535,153</div>
<div class="n" style="right:965.0px;top:1222.98px;color:#202122"><svg class="tri" width="24" height="24" viewBox="0 0 24 24"><path d="M0 24L12 0L24 24Z" fill="#76c940"/></svg> $32,297</div>
<div class="n" style="right:820.5px;top:1222.98px;color:#202122"><svg class="tri" width="24" height="24" viewBox="0 0 24 24"><path d="M0 24L12 0L24 24Z" fill="#76c940"/></svg> 1.38%</div>
<div class="n" style="right:609.5px;top:1222.98px;color:#202122"><svg class="tri" width="24" height="24" viewBox="0 0 24 24"><path d="M0 24L12 0L24 24Z" fill="#76c940"/></svg> 7.6%</div>
<div class="n" style="right:454.5px;top:1222.98px;color:#202122">$56,458</div>
<div class="n" style="right:299.5px;top:1222.98px;color:#202122">$53,590</div>
<div class="n" style="right:168.5px;top:1222.98px;color:#202122">2.46%</div>
<div class="n" style="right:37.5px;top:1222.98px;color:#202122">2.50%</div>
<div class="n" style="right:1933.5px;top:1286.58px;color:#202122">15</div>
<div style="left:96px;top:1295.4px;width:54px;height:36px;border:1.5px solid #e4e6ea;box-sizing:border-box;background:#fff"><svg width="100%" height="100%" viewBox="0 0 100 66" preserveAspectRatio="none" style="display:block"><defs><clipPath id="mdA"><path d="M0 0H50V30L0 5Z"/></clipPath><clipPath id="mdB"><path d="M50 33H100V63L50 38Z"/></clipPath></defs><rect width="50" height="33" fill="#e3ac1c"/><rect x="8.33" y="0" width="8.34" height="33" fill="#111"/><rect x="24.99" y="0" width="8.34" height="33" fill="#111"/><rect x="41.65" y="0" width="8.34" height="33" fill="#111"/><g clip-path="url(#mdA)"><rect width="50" height="33" fill="#111"/><rect x="8.33" y="0" width="8.34" height="33" fill="#e3ac1c"/><rect x="24.99" y="0" width="8.34" height="33" fill="#e3ac1c"/><rect x="41.65" y="0" width="8.34" height="33" fill="#e3ac1c"/></g><rect x="50" y="33" width="50" height="33" fill="#e3ac1c"/><rect x="58.33" y="33" width="8.34" height="33" fill="#111"/><rect x="74.99" y="33" width="8.34" height="33" fill="#111"/><rect x="91.65" y="33" width="8.34" height="33" fill="#111"/><g clip-path="url(#mdB)"><rect x="50" y="33" width="50" height="33" fill="#111"/><rect x="58.33" y="33" width="8.34" height="33" fill="#e3ac1c"/><rect x="74.99" y="33" width="8.34" height="33" fill="#e3ac1c"/><rect x="91.65" y="33" width="8.34" height="33" fill="#e3ac1c"/></g><rect x="50" y="0" width="50" height="33" fill="#fff"/><rect x="75" y="0" width="25" height="16.5" fill="#8e1f32"/><rect x="50" y="16.5" width="25" height="16.5" fill="#8e1f32"/><rect x="60" y="12" width="30" height="3" fill="#c98b95"/><rect x="73.5" y="4" width="3" height="26" fill="#c98b95"/><rect x="0" y="33" width="50" height="33" fill="#fff"/><rect x="25" y="33" width="25" height="16.5" fill="#8e1f32"/><rect x="0" y="49.5" width="25" height="16.5" fill="#8e1f32"/><rect x="10" y="45" width="30" height="3" fill="#c98b95"/><rect x="23.5" y="37" width="3" height="26" fill="#c98b95"/></svg></div>
<div style="left:158.5px;top:1286.58px;color:#2a45b0;white-space:nowrap;line-height:49.3px">Maryland <span class="ast">*</span></div>
<div class="n" style="right:1376.5px;top:1286.58px;color:#202122">$451,635</div>
<div class="n" style="right:1178.5px;top:1286.58px;color:#202122">$431,772</div>
<div class="n" style="right:965.0px;top:1286.58px;color:#202122"><svg class="tri" width="24" height="24" viewBox="0 0 24 24"><path d="M0 24L12 0L24 24Z" fill="#76c940"/></svg> $19,863</div>
<div class="n" style="right:820.5px;top:1286.58px;color:#202122"><svg class="tri" width="24" height="24" viewBox="0 0 24 24"><path d="M0 24L12 0L24 24Z" fill="#76c940"/></svg> 2.56%</div>
<div class="n" style="right:609.5px;top:1286.58px;color:#202122"><svg class="tri" width="24" height="24" viewBox="0 0 24 24"><path d="M0 24L12 0L24 24Z" fill="#76c940"/></svg> 6.1%</div>
<div class="n" style="right:454.5px;top:1286.58px;color:#202122">$73,245</div>
<div class="n" style="right:299.5px;top:1286.58px;color:#202122">$71,426</div>
<div class="n" style="right:168.5px;top:1286.58px;color:#202122">2.02%</div>
<div class="n" style="right:37.5px;top:1286.58px;color:#202122">1.99%</div>
<div class="n" style="right:1933.5px;top:1350.18px;color:#202122">16</div>
<div style="left:96px;top:1359.5px;width:54px;height:35px;border:1.5px solid #e4e6ea;box-sizing:border-box;background:#fff"><svg width="100%" height="100%" viewBox="0 0 100 66" preserveAspectRatio="none" style="display:block"><rect width="100" height="66" fill="#1d2f6b"/><rect y="22" width="100" height="22" fill="#fff"/><circle cx="42" cy="33" r="17" fill="#b92237"/><circle cx="42" cy="33" r="9" fill="#f3c41c"/><path d="M50 27 L62 22 L62 44 L50 39Z" fill="#fff"/><path d="M50 27L62 22V22H50Z M50 39L62 44H50Z" fill="#1d2f6b" opacity="0"/></svg></div>
<div style="left:158.5px;top:1350.18px;color:#2a45b0;white-space:nowrap;line-height:49.3px">Colorado <span class="ast">*</span></div>
<div class="n" style="right:1376.5px;top:1350.18px;color:#202122">$425,595</div>
<div class="n" style="right:1178.5px;top:1350.18px;color:#202122">$400,041</div>
<div class="n" style="right:965.0px;top:1350.18px;color:#202122"><svg class="tri" width="24" height="24" viewBox="0 0 24 24"><path d="M0 24L12 0L24 24Z" fill="#76c940"/></svg> $25,554</div>
<div class="n" style="right:820.5px;top:1350.18px;color:#202122"><svg class="tri" width="24" height="24" viewBox="0 0 24 24"><path d="M0 24L12 0L24 24Z" fill="#76c940"/></svg> 3.38%</div>
<div class="n" style="right:609.5px;top:1350.18px;color:#202122"><svg class="tri" width="24" height="24" viewBox="0 0 24 24"><path d="M0 24L12 0L24 24Z" fill="#76c940"/></svg> 7.9%</div>
<div class="n" style="right:454.5px;top:1350.18px;color:#202122">$73,218</div>
<div class="n" style="right:299.5px;top:1350.18px;color:#202122">$69,475</div>
<div class="n" style="right:168.5px;top:1350.18px;color:#202122">1.86%</div>
<div class="n" style="right:37.5px;top:1350.18px;color:#202122">1.83%</div>
<div class="n" style="right:1933.5px;top:1413.78px;color:#202122">17</div>
<div style="left:96px;top:1422.6px;width:54px;height:36px;border:1.5px solid #e4e6ea;box-sizing:border-box;background:#fff"><svg width="100%" height="100%" viewBox="0 0 100 66" preserveAspectRatio="none" style="display:block"><rect width="100" height="66" fill="#0d1a5e"/><path d="M48 22 L52 22 L51 56 L49 56Z" fill="#c8a646"/><ellipse cx="50" cy="36" rx="3" ry="9" fill="#c8a646"/><polygon points="72.00,36.00 72.47,37.35 73.90,37.38 72.76,38.25 73.18,39.62 72.00,38.80 70.82,39.62 71.24,38.25 70.10,37.38 71.53,37.35" fill="#c8a646"/><polygon points="70.81,41.84 71.28,43.20 72.71,43.23 71.57,44.09 71.98,45.46 70.81,44.64 69.63,45.46 70.05,44.09 68.91,43.23 70.34,43.20" fill="#c8a646"/><polygon points="67.36,47.06 67.83,48.41 69.26,48.44 68.12,49.30 68.54,50.67 67.36,49.86 66.19,50.67 66.60,49.30 65.46,48.44 66.89,48.41" fill="#c8a646"/><polygon points="62.03,51.07 62.50,52.42 63.94,52.45 62.79,53.32 63.21,54.69 62.03,53.87 60.86,54.69 61.27,53.32 60.13,52.45 61.56,52.42" fill="#c8a646"/><polygon points="55.40,53.45 55.87,54.80 57.30,54.83 56.16,55.70 56.58,57.07 55.40,56.25 54.23,57.07 54.64,55.70 53.50,54.83 54.93,54.80" fill="#c8a646"/><polygon points="48.18,53.94 48.65,55.29 50.09,55.32 48.95,56.19 49.36,57.56 48.18,56.74 47.01,57.56 47.42,56.19 46.28,55.32 47.71,55.29" fill="#c8a646"/><polygon points="41.16,52.48 41.63,53.84 43.07,53.87 41.92,54.73 42.34,56.10 41.16,55.28 39.99,56.10 40.40,54.73 39.26,53.87 40.69,53.84" fill="#c8a646"/><polygon points="35.10,49.24 35.57,50.60 37.00,50.63 35.86,51.49 36.28,52.86 35.10,52.04 33.93,52.86 34.34,51.49 33.20,50.63 34.63,50.60" fill="#c8a646"/><polygon points="30.65,44.57 31.12,45.92 32.55,45.95 31.41,46.82 31.83,48.19 30.65,47.37 29.48,48.19 29.89,46.82 28.75,45.95 30.18,45.92" fill="#c8a646"/><polygon points="28.30,38.96 28.77,40.32 30.20,40.35 29.06,41.21 29.48,42.58 28.30,41.76 27.12,42.58 27.54,41.21 26.40,40.35 27.83,40.32" fill="#c8a646"/><polygon points="28.30,33.04 28.77,34.39 30.20,34.42 29.06,35.29 29.48,36.66 28.30,35.84 27.12,36.66 27.54,35.29 26.40,34.42 27.83,34.39" fill="#c8a646"/><polygon points="30.65,27.43 31.12,28.79 32.55,28.82 31.41,29.68 31.83,31.05 30.65,30.23 29.47,31.05 29.89,29.68 28.75,28.82 30.18,28.79" fill="#c8a646"/><polygon points="35.10,22.76 35.57,24.11 37.00,24.14 35.86,25.01 36.27,26.38 35.10,25.56 33.92,26.38 34.34,25.01 33.20,24.14 34.63,24.11" fill="#c8a646"/><polygon points="41.16,19.52 41.63,20.87 43.06,20.90 41.92,21.76 42.34,23.14 41.16,22.32 39.98,23.14 40.40,21.76 39.26,20.90 40.69,20.87" fill="#c8a646"/><polygon points="48.18,18.06 48.65,19.41 50.08,19.44 48.94,20.31 49.36,21.68 48.18,20.86 47.00,21.68 47.42,20.31 46.28,19.44 47.71,19.41" fill="#c8a646"/><polygon points="55.40,18.55 55.87,19.90 57.30,19.93 56.16,20.80 56.57,22.17 55.40,21.35 54.22,22.17 54.64,20.80 53.50,19.93 54.93,19.90" fill="#c8a646"/><polygon points="62.03,20.93 62.50,22.28 63.93,22.31 62.79,23.18 63.21,24.55 62.03,23.73 60.85,24.55 61.27,23.18 60.13,22.31 61.56,22.28" fill="#c8a646"/><polygon points="67.36,24.94 67.83,26.29 69.26,26.32 68.12,27.19 68.53,28.56 67.36,27.74 66.18,28.56 66.60,27.19 65.46,26.32 66.89,26.29" fill="#c8a646"/><polygon points="70.81,30.15 71.28,31.51 72.71,31.53 71.57,32.40 71.98,33.77 70.81,32.95 69.63,33.77 70.05,32.40 68.90,31.53 70.34,31.51" fill="#c8a646"/><path d="M50 24 L34 14 M50 24 L66 14 M50 24 L42 10 M50 24 L58 10" stroke="#c8a646" stroke-width="0.8"/></svg></div>
<div style="left:158.5px;top:1413.78px;color:#2a45b0;white-space:nowrap;line-height:49.3px">Indiana <span class="ast">*</span></div>
<div class="n" style="right:1376.5px;top:1413.78px;color:#202122">$423,052</div>
<div class="n" style="right:1178.5px;top:1413.78px;color:#202122">$381,902</div>
<div class="n" style="right:965.0px;top:1413.78px;color:#202122"><svg class="tri" width="24" height="24" viewBox="0 0 24 24"><path d="M0 24L12 0L24 24Z" fill="#76c940"/></svg> $41,150</div>
<div class="n" style="right:820.5px;top:1413.78px;color:#202122"><svg class="tri" width="24" height="24" viewBox="0 0 24 24"><path d="M0 24L12 0L24 24Z" fill="#76c940"/></svg> 3.98%</div>
<div class="n" style="right:609.5px;top:1413.78px;color:#202122"><svg class="tri" width="24" height="24" viewBox="0 0 24 24"><path d="M0 24L12 0L24 24Z" fill="#76c940"/></svg> 6.8%</div>
<div class="n" style="right:454.5px;top:1413.78px;color:#202122">$62,140</div>
<div class="n" style="right:299.5px;top:1413.78px;color:#202122">$56,729</div>
<div class="n" style="right:168.5px;top:1413.78px;color:#202122">1.78%</div>
<div class="n" style="right:37.5px;top:1413.78px;color:#202122">1.77%</div>
<div class="n" style="right:1933.5px;top:1477.38px;color:#202122">18</div>
<div style="left:96px;top:1487.2px;width:54px;height:34px;border:1.5px solid #e4e6ea;box-sizing:border-box;background:#fff"><svg width="100%" height="100%" viewBox="0 0 100 66" preserveAspectRatio="none" style="display:block"><rect width="100" height="66" fill="#b30a0e"/><rect x="88" width="12" height="66" fill="#fff"/><rect x="90" width="10" height="66" fill="#b30a0e"/><rect x="88" width="4" height="66" fill="#1b2f70"/><rect x="86" width="2" height="66" fill="#fff"/><circle cx="42" cy="33" r="16" fill="#fff"/><circle cx="42" cy="33" r="14" fill="#1b2f70"/><polygon points="42.00,19.00 43.18,22.38 46.76,22.45 43.90,24.62 44.94,28.05 42.00,26.00 39.06,28.05 40.10,24.62 37.24,22.45 40.82,22.38" fill="#fff"/><polygon points="34.00,34.00 35.18,37.38 38.76,37.45 35.90,39.62 36.94,43.05 34.00,41.00 31.06,43.05 32.10,39.62 29.24,37.45 32.82,37.38" fill="#fff"/><polygon points="50.00,34.00 51.18,37.38 54.76,37.45 51.90,39.62 52.94,43.05 50.00,41.00 47.06,43.05 48.10,39.62 45.24,37.45 48.82,37.38" fill="#fff"/></svg></div>
<div style="left:158.5px;top:1477.38px;color:#2a45b0;white-space:nowrap;line-height:49.3px">Tennessee <span class="ast">*</span></div>
<div class="n" style="right:1376.5px;top:1477.38px;color:#202122">$421,086</div>
<div class="n" style="right:1178.5px;top:1477.38px;color:#202122">$379,454</div>
<div class="n" style="right:965.0px;top:1477.38px;color:#202122"><svg class="tri" width="24" height="24" viewBox="0 0 24 24"><path d="M0 24L12 0L24 24Z" fill="#76c940"/></svg> $41,632</div>
<div class="n" style="right:820.5px;top:1477.38px;color:#202122"><svg class="tri" width="24" height="24" viewBox="0 0 24 24"><path d="M0 24L12 0L24 24Z" fill="#76c940"/></svg> 1.84%</div>
<div class="n" style="right:609.5px;top:1477.38px;color:#202122"><svg class="tri" width="24" height="24" viewBox="0 0 24 24"><path d="M0 24L12 0L24 24Z" fill="#76c940"/></svg> 7.4%</div>
<div class="n" style="right:454.5px;top:1477.38px;color:#202122">$60,355</div>
<div class="n" style="right:299.5px;top:1477.38px;color:#202122">$55,532</div>
<div class="n" style="right:168.5px;top:1477.38px;color:#202122">1.74%</div>
<div class="n" style="right:37.5px;top:1477.38px;color:#202122">1.76%</div>
<div class="n" style="right:1933.5px;top:1540.98px;color:#202122">19</div>
<div style="left:96px;top:1549.8px;width:54px;height:36px;border:1.5px solid #e4e6ea;box-sizing:border-box;background:#fff"><svg width="100%" height="100%" viewBox="0 0 100 66" preserveAspectRatio="none" style="display:block"><rect width="100" height="66" fill="#5669b4"/><circle cx="50" cy="33" r="17" fill="#f6f1e4"/><circle cx="50" cy="33" r="13" fill="#d9c9a0"/><circle cx="50" cy="32" r="9" fill="#7a7a6a"/><rect x="42" y="46" width="16" height="3" fill="#c44"/></svg></div>
<div style="left:158.5px;top:1540.98px;color:#2a45b0;white-space:nowrap;line-height:49.3px">Minnesota <span class="ast">*</span></div>
<div class="n" style="right:1376.5px;top:1540.98px;color:#202122">$415,393</div>
<div class="n" style="right:1178.5px;top:1540.98px;color:#202122">$384,500</div>
<div class="n" style="right:965.0px;top:1540.98px;color:#202122"><svg class="tri" width="24" height="24" viewBox="0 0 24 24"><path d="M0 24L12 0L24 24Z" fill="#76c940"/></svg> $30,893</div>
<div class="n" style="right:820.5px;top:1540.98px;color:#202122"><svg class="tri" width="24" height="24" viewBox="0 0 24 24"><path d="M0 24L12 0L24 24Z" fill="#76c940"/></svg> 3.2%</div>
<div class="n" style="right:609.5px;top:1540.98px;color:#202122"><svg class="tri" width="24" height="24" viewBox="0 0 24 24"><path d="M0 24L12 0L24 24Z" fill="#76c940"/></svg> 7.5%</div>
<div class="n" style="right:454.5px;top:1540.98px;color:#202122">$72,770</div>
<div class="n" style="right:299.5px;top:1540.98px;color:#202122">$68,185</div>
<div class="n" style="right:168.5px;top:1540.98px;color:#202122">1.79%</div>
<div class="n" style="right:37.5px;top:1540.98px;color:#202122">1.79%</div>
<div class="n" style="right:1933.5px;top:1604.58px;color:#202122">20</div>
<div style="left:96px;top:1613.4px;width:54px;height:36px;border:1.5px solid #e4e6ea;box-sizing:border-box;background:#fff"><svg width="100%" height="100%" viewBox="0 0 100 66" preserveAspectRatio="none" style="display:block"><rect width="100" height="66" fill="#002868"/><path d="M50 33 L0.0 0 L7.7 0Z" fill="#bf0a30"/><path d="M50 33 L7.7 0 L15.4 0Z" fill="#fed700"/><path d="M50 33 L15.4 0 L23.1 0Z" fill="#bf0a30"/><path d="M50 33 L23.1 0 L30.8 0Z" fill="#fed700"/><path d="M50 33 L30.8 0 L38.5 0Z" fill="#bf0a30"/><path d="M50 33 L38.5 0 L46.2 0Z" fill="#fed700"/><path d="M50 33 L46.2 0 L53.8 0Z" fill="#bf0a30"/><path d="M50 33 L53.8 0 L61.5 0Z" fill="#fed700"/><path d="M50 33 L61.5 0 L69.2 0Z" fill="#bf0a30"/><path d="M50 33 L69.2 0 L76.9 0Z" fill="#fed700"/><path d="M50 33 L76.9 0 L84.6 0Z" fill="#bf0a30"/><path d="M50 33 L84.6 0 L92.3 0Z" fill="#fed700"/><path d="M50 33 L92.3 0 L100.0 0Z" fill="#bf0a30"/><path d="M0 0 L50 33 L0 30Z" fill="#bf0a30"/><path d="M100 0 L50 33 L100 30Z" fill="#bf0a30"/><polygon points="50.00,21.00 52.82,29.12 61.41,29.29 54.57,34.48 57.05,42.71 50.00,37.80 42.95,42.71 45.43,34.48 38.59,29.29 47.18,29.12" fill="#ce5c17"/></svg></div>
<div style="left:158.5px;top:1604.58px;color:#2a45b0;white-space:nowrap;line-height:49.3px">Arizona <span class="ast">*</span></div>
<div class="n" style="right:1376.5px;top:1604.58px;color:#202122">$409,577</div>
<div class="n" style="right:1178.5px;top:1604.58px;color:#202122">$377,476</div>
<div class="n" style="right:965.0px;top:1604.58px;color:#202122"><svg class="tri" width="24" height="24" viewBox="0 0 24 24"><path d="M0 24L12 0L24 24Z" fill="#76c940"/></svg> $32,101</div>
<div class="n" style="right:820.5px;top:1604.58px;color:#202122"><svg class="tri" width="24" height="24" viewBox="0 0 24 24"><path d="M0 24L12 0L24 24Z" fill="#76c940"/></svg> 4.5%</div>
<div class="n" style="right:609.5px;top:1604.58px;color:#202122"><svg class="tri" width="24" height="24" viewBox="0 0 24 24"><path d="M0 24L12 0L24 24Z" fill="#76c940"/></svg> 7.4%</div>
<div class="n" style="right:454.5px;top:1604.58px;color:#202122">$56,273</div>
<div class="n" style="right:299.5px;top:1604.58px;color:#202122">$51,865</div>
<div class="n" style="right:168.5px;top:1604.58px;color:#202122">1.78%</div>
<div class="n" style="right:37.5px;top:1604.58px;color:#202122">1.73%</div>
</body></html>
